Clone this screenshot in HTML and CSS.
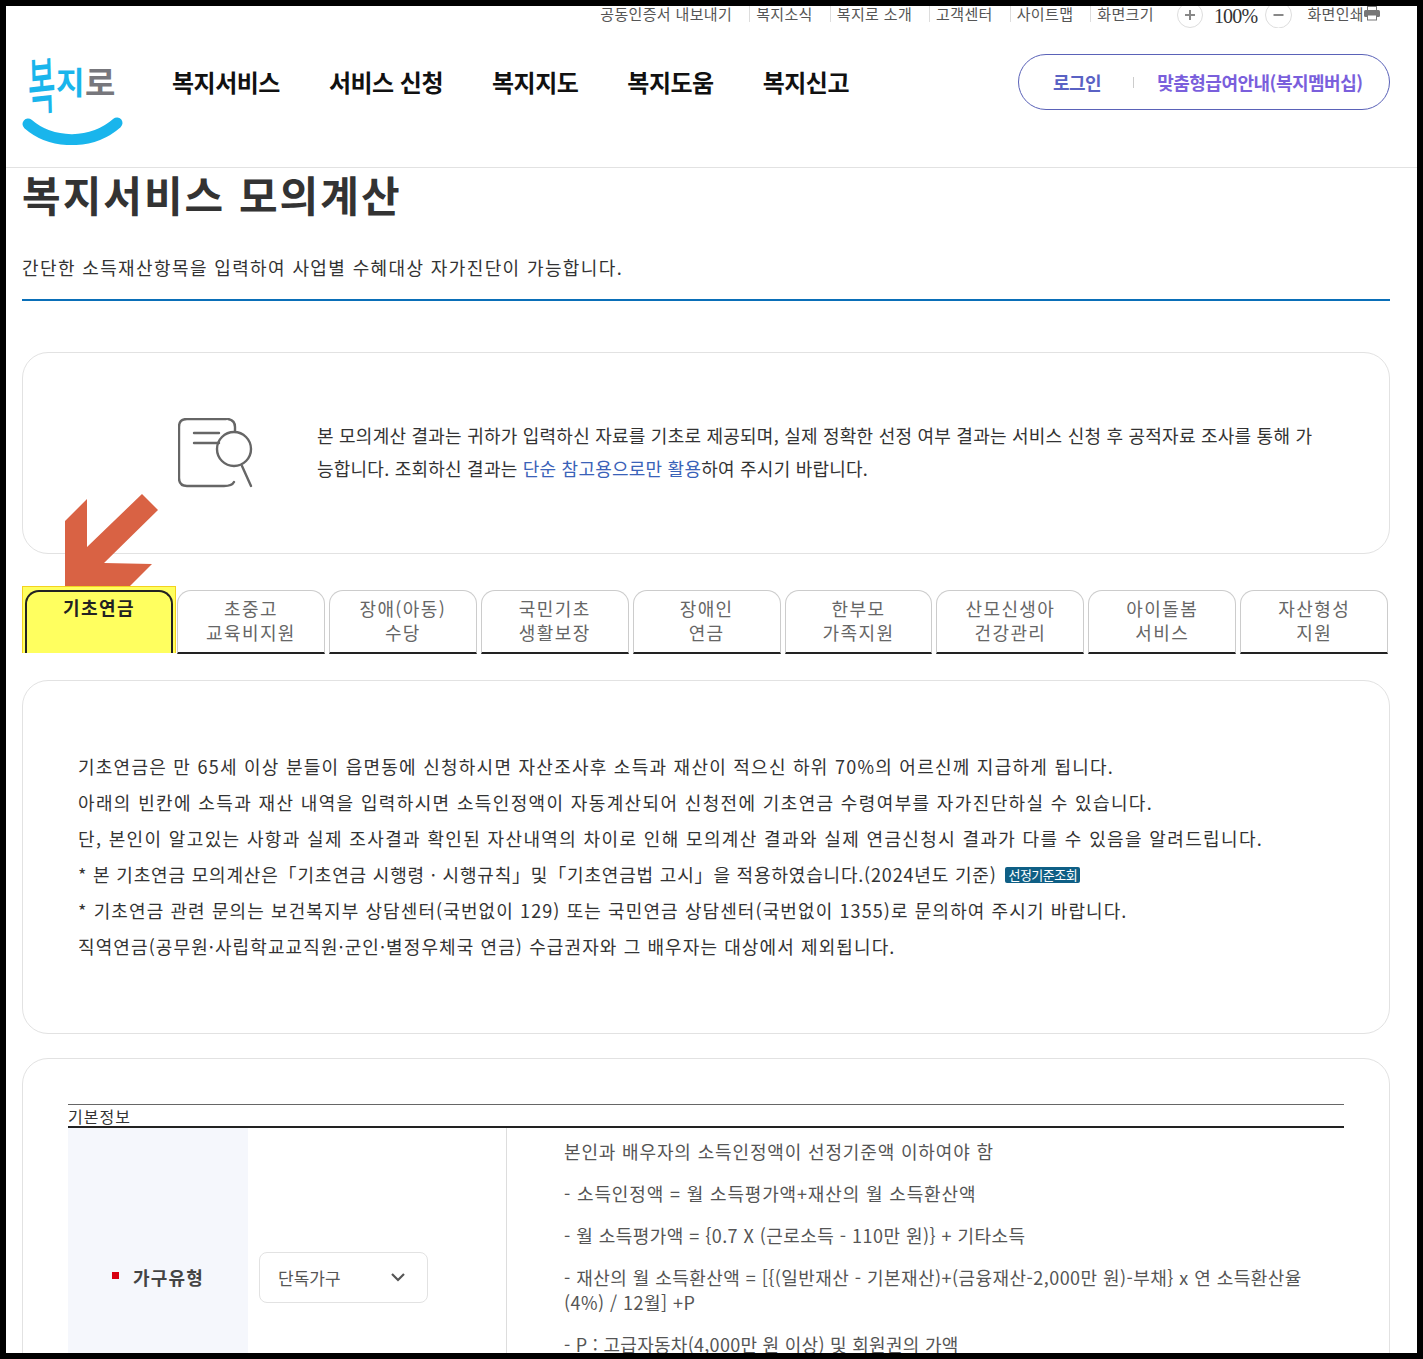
FILE: index.html
```html
<!DOCTYPE html>
<html lang="ko">
<head>
    <meta charset="UTF-8">
    <title>복지서비스 모의계산</title>
    <link rel="stylesheet" href="styles.css">
</head>
<body>
    <div class="util">
        <a class="util-link">공동인증서 내보내기</a>
        <a class="util-link sep">복지소식</a>
        <a class="util-link sep">복지로 소개</a>
        <a class="util-link sep">고객센터</a>
        <a class="util-link sep">사이트맵</a>
        <a class="util-link sep">화면크기</a>
        <svg class="zoom-btn sep-btn" width="26" height="22" viewBox="0 5 26 22" fill="none" stroke-width="2">
            <circle cx="13" cy="14" r="12.5" stroke="#ddd" stroke-width="1"/>
            <path d="M8 14 H18 M13 9 V19" stroke="#888"/>
        </svg>
        <span class="zoom-num">100%</span>
        <svg class="zoom-btn" width="27" height="22" viewBox="0 5 27 22" fill="none" stroke-width="2">
            <circle cx="13.5" cy="14" r="13" stroke="#ddd" stroke-width="1"/>
            <path d="M8.5 14 H18.5" stroke="#888"/>
        </svg>
        <a class="util-link print">화면인쇄</a>
        <svg class="print-icon" width="16" height="15" viewBox="0 0 16 15">
            <rect x="3.5" y="0.5" width="9" height="4" fill="#fff" stroke="#777"/>
            <rect x="0" y="4" width="16" height="7" rx="1.5" fill="#777"/>
            <rect x="3.5" y="9" width="9" height="5" fill="#fff" stroke="#777"/>
        </svg>
    </div>

    <header class="header">
        <div class="logo">
            <span class="logo-text"><span class="logo-bok">복</span><span class="logo-ji">지</span><span class="logo-ro">로</span></span>
            <svg class="logo-smile" width="102" height="30" viewBox="0 0 102 30">
                <path d="M6 9 C 30 30, 70 30, 95 8" fill="none" stroke="#19b5ec" stroke-width="11" stroke-linecap="round"/>
            </svg>
        </div>
        <nav class="nav">
            <a>복지서비스</a>
            <a>서비스 신청</a>
            <a>복지지도</a>
            <a>복지도움</a>
            <a>복지신고</a>
        </nav>
        <div class="login-box">
            <a class="login">로그인</a>
            <i class="login-sep"></i>
            <a class="member">맞춤형급여안내(복지멤버십)</a>
        </div>
    </header>

    <main class="wrap">
        <h1 class="title">복지서비스 모의계산</h1>
        <p class="sub">간단한 소득재산항목을 입력하여 사업별 수혜대상 자가진단이 가능합니다.</p>

        <section class="card notice">
            <svg class="notice-icon" width="76" height="70" viewBox="0 0 76 70" fill="none" stroke="#666" stroke-width="2.4" stroke-linecap="round">
                <path d="M48 1 H9 Q1 1 1 9 V60 Q1 68 9 68 H46 Q54 68 56 64"/>
                <path d="M50 1 Q57 2 57 9 V13"/>
                <path d="M16 15 H41"/>
                <path d="M16 25 H41"/>
                <circle cx="56" cy="31" r="17"/>
                <path d="M64 48 L73 68"/>
            </svg>
            <p class="notice-text">본 모의계산 결과는 귀하가 입력하신 자료를 기초로 제공되며, 실제 정확한 선정 여부 결과는 서비스 신청 후 공적자료 조사를 통해 가<br>능합니다. 조회하신 결과는 <span class="blue">단순 참고용으로만 활용</span>하여 주시기 바랍니다.</p>
        </section>

        <div class="tabs">
            <div class="tab-mark"><a class="tab active">기초연금</a></div>
            <a class="tab">초중고<br>교육비지원</a>
            <a class="tab">장애(아동)<br>수당</a>
            <a class="tab">국민기초<br>생활보장</a>
            <a class="tab">장애인<br>연금</a>
            <a class="tab">한부모<br>가족지원</a>
            <a class="tab">산모신생아<br>건강관리</a>
            <a class="tab">아이돌봄<br>서비스</a>
            <a class="tab">자산형성<br>지원</a>
        </div>

        <section class="card intro">
            <p>기초연금은 만 65세 이상 분들이 읍면동에 신청하시면 자산조사후 소득과 재산이 적으신 하위 70%의 어르신께 지급하게 됩니다.</p>
            <p class="loose">아래의 빈칸에 소득과 재산 내역을 입력하시면 소득인정액이 자동계산되어 신청전에 기초연금 수령여부를 자가진단하실 수 있습니다.</p>
            <p class="loose">단, 본인이 알고있는 사항과 실제 조사결과 확인된 자산내역의 차이로 인해 모의계산 결과와 실제 연금신청시 결과가 다를 수 있음을 알려드립니다.</p>
            <p class="tight">* 본 기초연금 모의계산은「기초연금 시행령 · 시행규칙」및「기초연금법 고시」을 적용하였습니다.(2024년도 기준) <a class="badge">선정기준조회</a></p>
            <p class="mid">* 기초연금 관련 문의는 보건복지부 상담센터(국번없이 129) 또는 국민연금 상담센터(국번없이 1355)로 문의하여 주시기 바랍니다.</p>
            <p class="mid">직역연금(공무원·사립학교교직원·군인·별정우체국 연금) 수급권자와 그 배우자는 대상에서 제외됩니다.</p>
        </section>

        <section class="card form-card">
            <div class="caption">기본정보</div>
            <div class="row">
                <div class="row-head"><i class="req"></i>가구유형</div>
                <div class="row-input">
                    <div class="select">
                        <span>단독가구</span>
                        <svg width="14" height="9" viewBox="0 0 14 9" fill="none" stroke="#555" stroke-width="2.2"><path d="M1 1 L7 7 L13 1"/></svg>
                    </div>
                </div>
                <div class="row-help">
                    <p class="wide">본인과 배우자의 소득인정액이 선정기준액 이하여야 함</p>
                    <p class="wide">- 소득인정액 = 월 소득평가액+재산의 월 소득환산액</p>
                    <p>- 월 소득평가액 = {0.7 X (근로소득 - 110만 원)} + 기타소득</p>
                    <p>- 재산의 월 소득환산액 = [{(일반재산 - 기본재산)+(금융재산-2,000만 원)-부채} x 연 소득환산율<br>(4%) / 12월] +P</p>
                    <p class="narrow">- P : 고급자동차(4,000만 원 이상) 및 회원권의 가액</p>
                </div>
            </div>
        </section>

        <svg class="arrow" width="94" height="94" viewBox="0 0 94 94">
            <polygon points="77,1 93,17 39,70 87,71 65,93 0,93 0,28 22,6 22,54" fill="#d96244"/>
        </svg>
    </main>
</body>
</html>
```

FILE: styles.css
```css
* {
    box-sizing: border-box;
}
html, body {
    margin: 0;
    height: 1359px;
    overflow: hidden;
}
body {
    border: 6px solid #000;
    background: #fff;
    font-family: "Noto Sans CJK KR", "Noto Sans", sans-serif;
    color: #333;
}
p {
    margin: 0;
}

/* top links */
.util {
    display: flex;
    justify-content: flex-end;
    align-items: flex-start;
    height: 22px;
    padding-right: 37px;
    font-size: 15px;
    letter-spacing: 0.35px;
    color: #555;
}
.util-link {
    line-height: 16px;
}
.util-link.sep {
    border-left: 1px solid #ddd;
    padding-left: 6px;
    margin-left: 17px;
}
.zoom-btn {
    flex: none;
}
.sep-btn {
    margin-left: 23px;
}
.zoom-num {
    font-family: "Liberation Serif", serif;
    font-size: 20px;
    line-height: 20px;
    letter-spacing: -0.8px;
    color: #333;
    margin: 0 8px 0 11px;
}
.print {
    margin-left: 15px;
}
.print-icon {
    flex: none;
}

/* header */
.header {
    display: flex;
    align-items: flex-start;
    height: 140px;
    padding: 26px 27px 0 16px;
    border-bottom: 1px solid #e2e2e2;
}
.logo {
    position: relative;
    flex: none;
    width: 100px;
    height: 93px;
    margin-top: -2px;
}
.logo-text {
    display: flex;
    align-items: flex-start;
    padding-left: 5px;
    font-weight: 700;
    line-height: 1;
}
.logo-bok {
    width: 29px;
    color: #19b5ec;
    font-size: 30px;
    font-weight: 500;
    margin-top: 1px;
    transform: scaleY(2.05) rotate(-3deg);
    transform-origin: top left;
}
.logo-ji {
    width: 29px;
    color: #19b5ec;
    font-size: 31px;
    margin-top: 13px;
}
.logo-ro {
    color: #77777c;
    font-size: 33px;
    margin-top: 13px;
}
.logo-smile {
    position: absolute;
    left: 0;
    bottom: 0;
}
.nav {
    display: flex;
    gap: 49px;
    margin-left: 50px;
    font-size: 24px;
    font-weight: 700;
    line-height: 56px;
    letter-spacing: -0.5px;
    color: #111;
}
.login-box {
    display: flex;
    align-items: center;
    width: 372px;
    height: 56px;
    margin-left: auto;
    padding-left: 34px;
    border: 1px solid #5a62b8;
    border-radius: 28px;
    font-size: 18px;
    font-weight: 700;
    letter-spacing: -0.5px;
    color: #5a62c4;
}
.login-sep {
    width: 1px;
    height: 11px;
    background: #ccc;
    margin: 0 23px 0 32px;
}
.member {
    color: #7a5fdc;
}

/* page */
.wrap {
    position: relative;
    width: 1368px;
    height: 1195px;
    margin: -10px 0 0 16px;
    padding-top: 10px;
    overflow: hidden;
}
.title {
    margin: 0;
    height: 57px;
    font-size: 42px;
    font-weight: 700;
    line-height: 52px;
    letter-spacing: 2px;
    color: #333;
}
.sub {
    height: 76px;
    padding-top: 27px;
    border-bottom: 2px solid #0a6fb8;
    font-size: 18px;
    line-height: 30px;
    letter-spacing: 1.38px;
}
.card {
    border: 1px solid #e2e2e2;
    border-radius: 26px;
}
.notice {
    display: flex;
    align-items: flex-start;
    height: 202px;
    margin-top: 51px;
    padding: 65px 70px 0 155px;
}
.notice-icon {
    flex: none;
}
.notice-text {
    margin: 0 0 0 63px;
    padding-top: 1px;
    font-size: 18px;
    line-height: 33px;
    letter-spacing: 0.23px;
    white-space: nowrap;
}
.blue {
    color: #3a62b8;
}

/* tabs */
.tabs {
    display: flex;
    gap: 4px;
    height: 68px;
    margin-top: 32px;
    align-items: flex-end;
}
.tab {
    width: 147.9px;
    height: 64px;
    padding-top: 5px;
    border: 1px solid #ccc;
    border-bottom: 2px solid #222;
    border-radius: 14px 14px 0 0;
    font-size: 18px;
    line-height: 24px;
    letter-spacing: 1.4px;
    text-align: center;
    color: #666;
}
.tab-mark {
    flex: none;
    align-self: flex-start;
    width: 154px;
    height: 67px;
    margin-right: -3px;
    padding: 3px 2px 0;
    background: #ffff5f;
    border: 1px solid #f3d21f;
    border-bottom: none;
}
.tab.active {
    display: block;
    width: 148px;
    height: 63px;
    padding-top: 3px;
    background: #ffff5f;
    border: 2px solid #222;
    border-bottom: none;
    font-weight: 700;
    color: #222;
}

/* intro */
.intro {
    height: 354px;
    margin-top: 26px;
    padding: 67px 55px 0;
    font-size: 18px;
    line-height: 36px;
    letter-spacing: 1.25px;
    white-space: nowrap;
}
.intro .loose {
    letter-spacing: 1.36px;
}
.intro .tight {
    letter-spacing: 0.82px;
}
.intro .mid {
    letter-spacing: 1.1px;
}
.badge {
    display: inline-block;
    padding: 0 3px;
    margin-left: 3px;
    border-radius: 2px;
    background: #0f5f85;
    color: #fff;
    font-size: 13px;
    line-height: 16px;
    letter-spacing: -0.5px;
    vertical-align: 2px;
}

/* form */
.form-card {
    height: 400px;
    margin-top: 24px;
    padding: 45px 45px 0;
}
.caption {
    height: 24px;
    border-top: 1px solid #666;
    border-bottom: 2px solid #222;
    font-size: 16px;
    line-height: 22px;
    letter-spacing: 1px;
}
.row {
    display: flex;
    height: 298px;
}
.row-head {
    display: flex;
    align-items: center;
    width: 180px;
    padding-left: 44px;
    background: #f5f7fc;
    font-size: 18px;
    font-weight: 700;
    letter-spacing: 1.2px;
    color: #444;
}
.req {
    width: 7px;
    height: 7px;
    margin: -4px 14px 0 0;
    background: #d80010;
}
.row-input {
    display: flex;
    align-items: center;
    width: 259px;
    padding-left: 11px;
    border-right: 1px solid #ddd;
}
.select {
    display: flex;
    align-items: center;
    justify-content: space-between;
    width: 169px;
    height: 51px;
    padding: 0 22px 0 18px;
    border: 1px solid #e2e2e2;
    border-radius: 8px;
    font-size: 17px;
    color: #555;
}
.row-help {
    flex: 1;
    padding: 11px 28px 0 57px;
    font-size: 18px;
    line-height: 25px;
    letter-spacing: 0.45px;
    color: #555;
}
.row-help p {
    margin-bottom: 17px;
}
.row-help .wide {
    letter-spacing: 0.85px;
}
.row-help .narrow {
    letter-spacing: 0.28px;
}

/* marker arrow over the first tab */
.arrow {
    position: absolute;
    left: 43px;
    top: 335px;
}
```
